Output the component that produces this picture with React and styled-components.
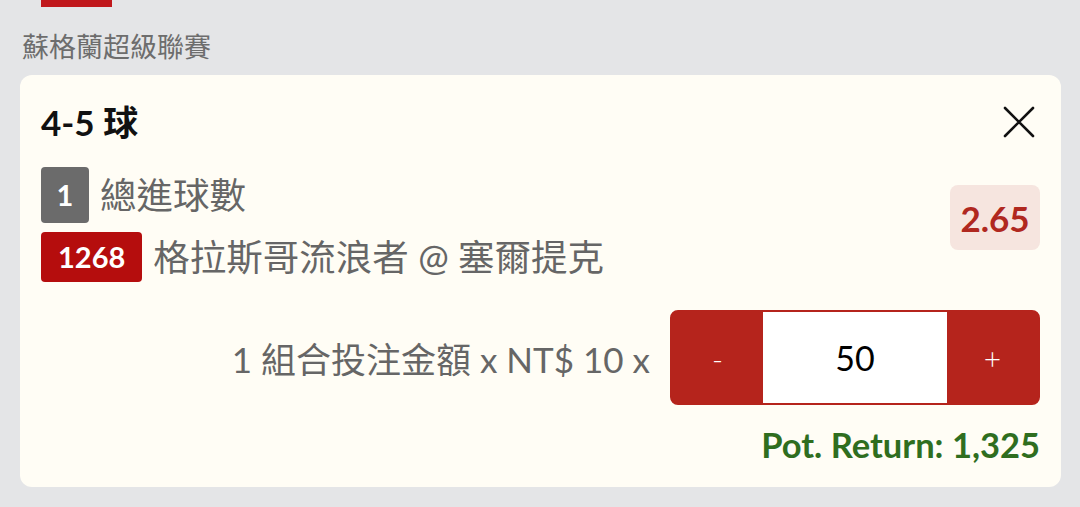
import React, { useState } from "react";
import styled, { createGlobalStyle } from "styled-components";

const GlobalStyle = createGlobalStyle`
  html, body {
    margin: 0;
    padding: 0;
    background: #e4e5e7;
    font-family: Lato, "Noto Sans CJK TC", sans-serif;
  }
`;

const Page = styled.div`
  padding: 0 19px 20px 20px;
`;

const TabBar = styled.div`
  height: 7px;
  display: flex;
`;

const TabIndicator = styled.div`
  width: 71px;
  height: 7px;
  margin-left: 21px;
  background: #c0181c;
`;

const League = styled.div`
  padding: 23px 0 11px 2px;
  font-size: 27px;
  line-height: 34px;
  color: #6d6d6d;
`;

const Card = styled.div`
  background: #fffdf5;
  border-radius: 12px;
  padding: 24px 21px 22px 21px;
  display: flex;
  flex-direction: column;
`;

const Header = styled.div`
  height: 46px;
  display: flex;
  align-items: center;
  justify-content: space-between;
`;

const Title = styled.h2`
  margin: 0;
  font-size: 35px;
  line-height: 44px;
  font-weight: 700;
  color: #111;
`;

const CloseButton = styled.button`
  border: none;
  background: none;
  padding: 0;
  margin-right: 4px;
  width: 34px;
  height: 34px;
  display: flex;
  align-items: center;
  justify-content: center;
  cursor: pointer;
`;

const Selection = styled.div`
  margin-top: 22px;
  display: flex;
  align-items: center;
  justify-content: space-between;
`;

const Lines = styled.div`
  display: flex;
  flex-direction: column;
  gap: 9px;
`;

const Line = styled.div`
  display: flex;
  align-items: center;
  gap: 11px;
  font-size: 36.5px;
  line-height: 50px;
  color: #666;
`;

const Badge = styled.span`
  display: inline-flex;
  align-items: center;
  justify-content: center;
  height: ${(p) => p.$h}px;
  min-width: 48px;
  padding: 0 ${(p) => (p.$wide ? 17 : 0)}px;
  box-sizing: border-box;
  border-radius: 4px;
  background: ${(p) => p.$bg};
  color: #fff;
  font-weight: 700;
  font-size: 29px;
`;

const Odds = styled.div`
  width: 90px;
  height: 65px;
  margin-top: -14px;
  border-radius: 8px;
  background: #f6e5df;
  color: #b0281f;
  font-size: 35px;
  font-weight: 700;
  display: flex;
  align-items: center;
  justify-content: center;
`;

const StakeRow = styled.div`
  margin-top: 28px;
  display: flex;
  align-items: center;
  justify-content: flex-end;
  gap: 20px;
`;

const StakeLabel = styled.span`
  font-size: 35px;
  color: #666;
`;

const Stepper = styled.div`
  width: 370px;
  height: 95px;
  box-sizing: border-box;
  border: 2px solid #b5241c;
  border-radius: 8px;
  background: #b5241c;
  display: flex;
  overflow: hidden;
`;

const StepButton = styled.button`
  width: 91px;
  border: none;
  background: #b5241c;
  color: #fff;
  font-family: inherit;
  font-size: 30px;
  font-weight: 300;
  padding: 0;
  cursor: pointer;
`;

const Amount = styled.input`
  flex: 1;
  min-width: 0;
  border: none;
  outline: none;
  background: #fff;
  text-align: center;
  font-family: inherit;
  font-size: 34px;
  color: #000;
`;

const PotReturn = styled.div`
  margin-top: 20px;
  height: 40px;
  line-height: 40px;
  text-align: right;
  font-size: 34.5px;
  font-weight: 700;
  color: #2f6e1f;
`;

export default function App() {
  const [amount, setAmount] = useState(50);
  const odds = 2.65;
  const unit = 10;

  return (
    <>
      <GlobalStyle />
      <Page>
        <TabBar>
          <TabIndicator />
        </TabBar>
        <League>蘇格蘭超級聯賽</League>
        <Card>
          <Header>
            <Title>4-5 球</Title>
            <CloseButton aria-label="close">
              <svg width="32" height="32" viewBox="0 0 32 32">
                <path d="M2 2 L30 30 M30 2 L2 30" stroke="#111" strokeWidth="2.6" strokeLinecap="round" />
              </svg>
            </CloseButton>
          </Header>
          <Selection>
            <Lines>
              <Line>
                <Badge $bg="#6b6b6b" $h={56}>1</Badge>
                總進球數
              </Line>
              <Line>
                <Badge $bg="#b50d0d" $h={50} $wide>1268</Badge>
                格拉斯哥流浪者 @ 塞爾提克
              </Line>
            </Lines>
            <Odds>{odds.toFixed(2)}</Odds>
          </Selection>
          <StakeRow>
            <StakeLabel>1 組合投注金額 x NT$ {unit} x</StakeLabel>
            <Stepper>
              <StepButton onClick={() => setAmount((a) => Math.max(1, a - 1))}>-</StepButton>
              <Amount value={amount} onChange={(e) => setAmount(Number(e.target.value) || 0)} />
              <StepButton onClick={() => setAmount((a) => a + 1)}>+</StepButton>
            </Stepper>
          </StakeRow>
          <PotReturn>
            Pot. Return: {Math.round(amount * unit * odds).toLocaleString("en-US")}
          </PotReturn>
        </Card>
      </Page>
    </>
  );
}
